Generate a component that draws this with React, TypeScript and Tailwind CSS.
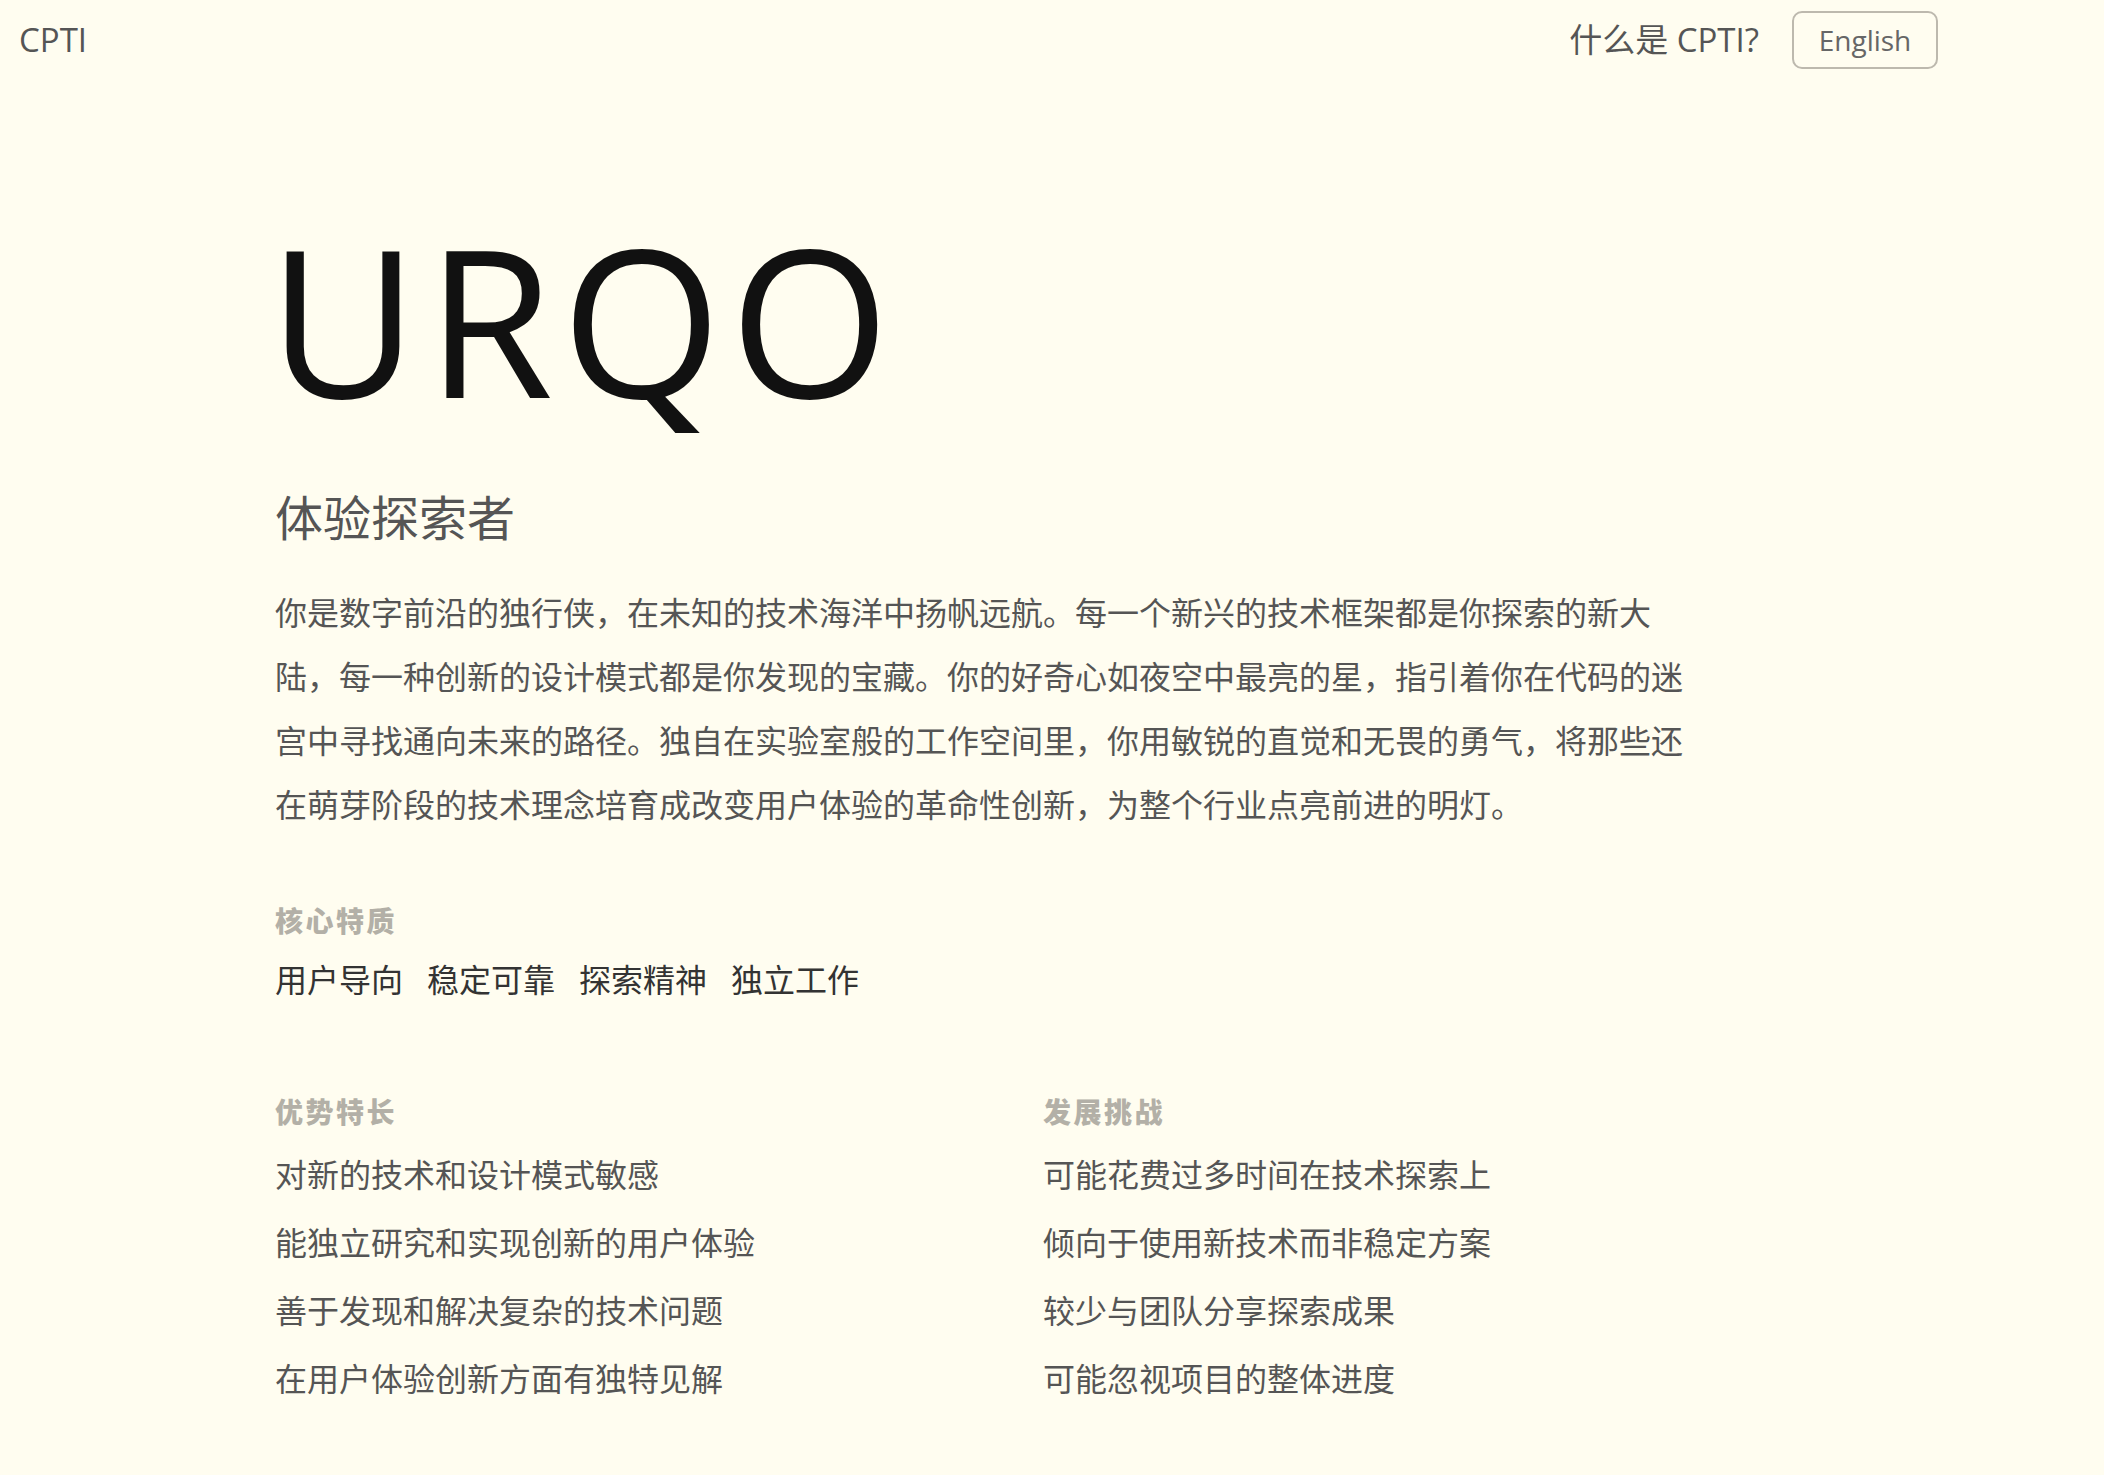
const sans = "font-['Open_Sans','Noto_Sans_CJK_SC',sans-serif]"

const traits = ["用户导向", "稳定可靠", "探索精神", "独立工作"]

const strengths = [
  "对新的技术和设计模式敏感",
  "能独立研究和实现创新的用户体验",
  "善于发现和解决复杂的技术问题",
  "在用户体验创新方面有独特见解",
]

const challenges = [
  "可能花费过多时间在技术探索上",
  "倾向于使用新技术而非稳定方案",
  "较少与团队分享探索成果",
  "可能忽视项目的整体进度",
]

function Label({ children }: { children: string }) {
  return (
    <h3 className="text-[28px] leading-none font-black tracking-[0.09em] text-[#b3b0a7]">{children}</h3>
  )
}

function ListColumn({ title, items }: { title: string; items: string[] }) {
  return (
    <div>
      <Label>{title}</Label>
      <ul className="mt-[33px] flex flex-col gap-[36px]">
        {items.map((item) => (
          <li key={item} className="text-[32px] leading-none text-[#555]">
            {item}
          </li>
        ))}
      </ul>
    </div>
  )
}

export default function App() {
  return (
    <div className={`min-h-screen bg-[#fffdf0] ${sans}`}>
      <header className="flex h-[80px] items-center justify-between pl-[19px] pr-[166px]">
        <span className="text-[33px] text-[#555]">CPTI</span>
        <div className="flex items-center gap-[33px]">
          <a className="text-[33px] text-[#555]">什么是 CPTI?</a>
          <button className="h-[58px] w-[146px] rounded-[10px] border-2 border-[#bdb9ae] text-[28px] text-[#666]">
            English
          </button>
        </div>
      </header>

      <main className="mx-auto w-[1554px] pt-[135px] pb-[80px]">
        <h1 className="-ml-[7px] text-[206px] leading-none tracking-[8px] text-[#111]">URQO</h1>
        <h2 className="mt-[73px] text-[48px] leading-none text-[#555]">体验探索者</h2>
        <p className="mt-[39px] max-w-[1424px] text-[32px] leading-[64px] text-[#555]">
          你是数字前沿的独行侠，在未知的技术海洋中扬帆远航。每一个新兴的技术框架都是你探索的新大陆，每一种创新的设计模式都是你发现的宝藏。你的好奇心如夜空中最亮的星，指引着你在代码的迷宫中寻找通向未来的路径。独自在实验室般的工作空间里，你用敏锐的直觉和无畏的勇气，将那些还在萌芽阶段的技术理念培育成改变用户体验的革命性创新，为整个行业点亮前进的明灯。
        </p>

        <section className="mt-[70px]">
          <Label>核心特质</Label>
          <div className="mt-[29px] flex gap-[24px] text-[32px] leading-none text-[#333]">
            {traits.map((t) => (
              <span key={t}>{t}</span>
            ))}
          </div>
        </section>

        <section className="mt-[102px] grid w-[1536px] grid-cols-2">
          <ListColumn title="优势特长" items={strengths} />
          <ListColumn title="发展挑战" items={challenges} />
        </section>
      </main>
    </div>
  )
}
